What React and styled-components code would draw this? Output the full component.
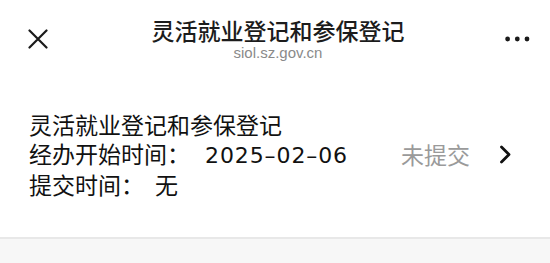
import React from 'react'
import styled, { createGlobalStyle } from 'styled-components'

const GlobalStyle = createGlobalStyle`
  html, body {
    margin: 0;
    padding: 0;
    background: #ffffff;
  }
  body {
    font-family: "Noto Sans CJK SC", "Noto Sans", sans-serif;
    color: #1a1a1a;
  }
`

const Page = styled.div`
  width: 550px;
  height: 263px;
  display: flex;
  flex-direction: column;
  background: #f7f7f7;
  overflow: hidden;
`

const NavBar = styled.header`
  display: grid;
  grid-template-columns: 1fr auto 1fr;
  align-items: center;
  height: 80px;
  padding: 17px 0 20px;
  box-sizing: border-box;
  background: #ffffff;
`

const NavSide = styled.div`
  display: flex;
  align-items: center;
  justify-content: ${({ end }) => (end ? 'flex-end' : 'flex-start')};
  padding: ${({ end }) => (end ? '0 20px 0 0' : '0 0 0 28px')};
`

const TitleBlock = styled.div`
  display: flex;
  flex-direction: column;
  align-items: center;
  margin-left: 6px;
`

const Title = styled.div`
  font-size: 23px;
  font-weight: 500;
  line-height: 26px;
  color: #1c1c1c;
`

const SubTitle = styled.div`
  margin-top: 2px;
  font-family: "Liberation Sans", Arial, sans-serif;
  font-size: 15px;
  line-height: 16px;
  color: #8a8a8a;
`

const Card = styled.section`
  display: flex;
  align-items: center;
  padding: 30px 38px 38px 29px;
  background: #ffffff;
  border-bottom: 2px solid #e8e8e8;
`

const Info = styled.div`
  flex: 1;
  display: flex;
  flex-direction: column;
`

const Line = styled.div`
  font-size: 23px;
  line-height: 29px;
  color: #111111;
  white-space: nowrap;
`

const Value = styled.span`
  margin-left: ${({ gap }) => gap}px;
  ${({ mono }) =>
    mono &&
    `
    font-family: "DejaVu Sans", sans-serif;
    font-size: 22px;
    letter-spacing: 0.9px;
  `}
`

const Status = styled.div`
  display: flex;
  align-items: center;
  gap: 29px;
`

const StatusText = styled.span`
  font-size: 23px;
  line-height: 29px;
  color: #9a9a9a;
`

const CloseIcon = () => (
  <svg width="20" height="20" viewBox="0 0 20 20">
    <path d="M1.5 1.5 L18.5 18.5 M18.5 1.5 L1.5 18.5" stroke="#1a1a1a" strokeWidth="2.2" strokeLinecap="round" />
  </svg>
)

const MoreIcon = () => (
  <svg width="25" height="6" viewBox="0 0 25 6">
    <circle cx="2.6" cy="3" r="2.4" fill="#1a1a1a" />
    <circle cx="12.3" cy="3" r="2.4" fill="#1a1a1a" />
    <circle cx="22" cy="3" r="2.4" fill="#1a1a1a" />
  </svg>
)

const Chevron = () => (
  <svg width="13" height="19" viewBox="0 0 13 19">
    <path d="M2.5 2 L10 9.5 L2.5 17" fill="none" stroke="#111111" strokeWidth="2.8" strokeLinecap="round" strokeLinejoin="round" />
  </svg>
)

const App = () => {
  return (
    <Page>
      <GlobalStyle />
      <NavBar>
        <NavSide>
          <CloseIcon />
        </NavSide>
        <TitleBlock>
          <Title>灵活就业登记和参保登记</Title>
          <SubTitle>siol.sz.gov.cn</SubTitle>
        </TitleBlock>
        <NavSide end>
          <MoreIcon />
        </NavSide>
      </NavBar>
      <Card>
        <Info>
          <Line>灵活就业登记和参保登记</Line>
          <Line>
            经办开始时间：
            <Value gap={15} mono>
              2025–02–06
            </Value>
          </Line>
          <Line>
            提交时间：<Value gap={11}>无</Value>
          </Line>
        </Info>
        <Status>
          <StatusText>未提交</StatusText>
          <Chevron />
        </Status>
      </Card>
    </Page>
  )
}

export default App
